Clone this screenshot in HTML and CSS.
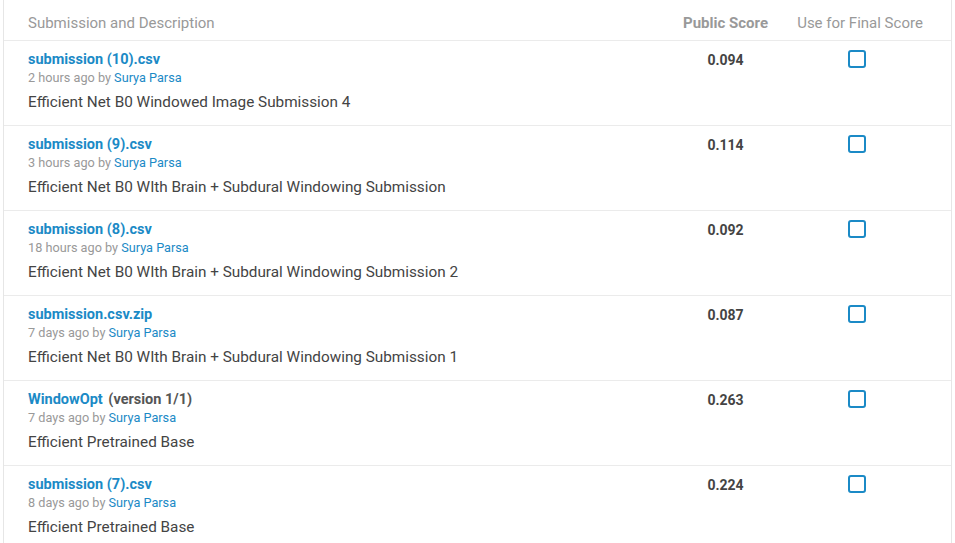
FILE: index.html
```html
<!DOCTYPE html>
<html>
<head>
<meta charset="utf-8">
<link rel="stylesheet" href="styles.css">
</head>
<body>
<div class="table">
  <div class="row head">
    <div class="c-main">Submission and Description</div>
    <div class="c-score strong">Public Score</div>
    <div class="c-final">Use for Final Score</div>
  </div>

  <div class="row">
    <div class="c-main">
      <div class="title"><a>submission (10).csv</a></div>
      <div class="meta">2 hours ago by <a>Surya Parsa</a></div>
      <div class="desc">Efficient Net B0 Windowed Image Submission 4</div>
    </div>
    <div class="c-score score">0.094</div>
    <div class="c-final"><span class="box"></span></div>
  </div>

  <div class="row">
    <div class="c-main">
      <div class="title"><a>submission (9).csv</a></div>
      <div class="meta">3 hours ago by <a>Surya Parsa</a></div>
      <div class="desc">Efficient Net B0 WIth Brain + Subdural Windowing Submission</div>
    </div>
    <div class="c-score score">0.114</div>
    <div class="c-final"><span class="box"></span></div>
  </div>

  <div class="row">
    <div class="c-main">
      <div class="title"><a>submission (8).csv</a></div>
      <div class="meta">18 hours ago by <a>Surya Parsa</a></div>
      <div class="desc">Efficient Net B0 WIth Brain + Subdural Windowing Submission 2</div>
    </div>
    <div class="c-score score">0.092</div>
    <div class="c-final"><span class="box"></span></div>
  </div>

  <div class="row">
    <div class="c-main">
      <div class="title"><a>submission.csv.zip</a></div>
      <div class="meta">7 days ago by <a>Surya Parsa</a></div>
      <div class="desc">Efficient Net B0 WIth Brain + Subdural Windowing Submission 1</div>
    </div>
    <div class="c-score score">0.087</div>
    <div class="c-final"><span class="box"></span></div>
  </div>

  <div class="row">
    <div class="c-main">
      <div class="title"><a>WindowOpt</a> <span class="ver">(version 1/1)</span></div>
      <div class="meta">7 days ago by <a>Surya Parsa</a></div>
      <div class="desc">Efficient Pretrained Base</div>
    </div>
    <div class="c-score score">0.263</div>
    <div class="c-final"><span class="box"></span></div>
  </div>

  <div class="row">
    <div class="c-main">
      <div class="title"><a>submission (7).csv</a></div>
      <div class="meta">8 days ago by <a>Surya Parsa</a></div>
      <div class="desc">Efficient Pretrained Base</div>
    </div>
    <div class="c-score score">0.224</div>
    <div class="c-final"><span class="box"></span></div>
  </div>
</div>
</body>
</html>
```
FILE: styles.css
```css
html, body {
  margin: 0;
  padding: 0;
  background: #fff;
}
body {
  font-family: Roboto, "Liberation Sans", sans-serif;
  color: #444;
}
.table {
  margin-left: 3px;
  width: 947px;
  border-left: 1px solid #e6e6e6;
  border-right: 1px solid #e6e6e6;
}
.row {
  display: grid;
  grid-template-columns: 1fr 91px 178px;
  padding: 10px 2px 14px 24px;
  border-bottom: 1px solid #ebebeb;
}
.row.head {
  padding-top: 14px;
  padding-bottom: 8px;
  font-size: 15px;
  line-height: 18px;
  color: #999;
}
.c-score, .c-final {
  display: flex;
  justify-content: center;
  align-items: flex-start;
}
.strong {
  font-weight: 700;
}
.title {
  font-size: 14.5px;
  line-height: 18px;
  font-weight: 700;
}
.title a, .meta a {
  color: #1b8ac6;
}
.ver {
  color: #555;
  margin-left: 2px;
}
.meta {
  font-size: 12.7px;
  line-height: 18px;
  color: #999;
}
.desc {
  margin-top: 6px;
  font-size: 15.3px;
  line-height: 18px;
  color: #444;
}
.score {
  font-size: 14px;
  line-height: 18px;
  font-weight: 700;
  color: #444;
}
.box {
  display: block;
  width: 14px;
  height: 14px;
  border: 2px solid #1b8ac6;
  border-radius: 3px;
  margin-top: -1px;
  margin-right: 6px;
}
```
